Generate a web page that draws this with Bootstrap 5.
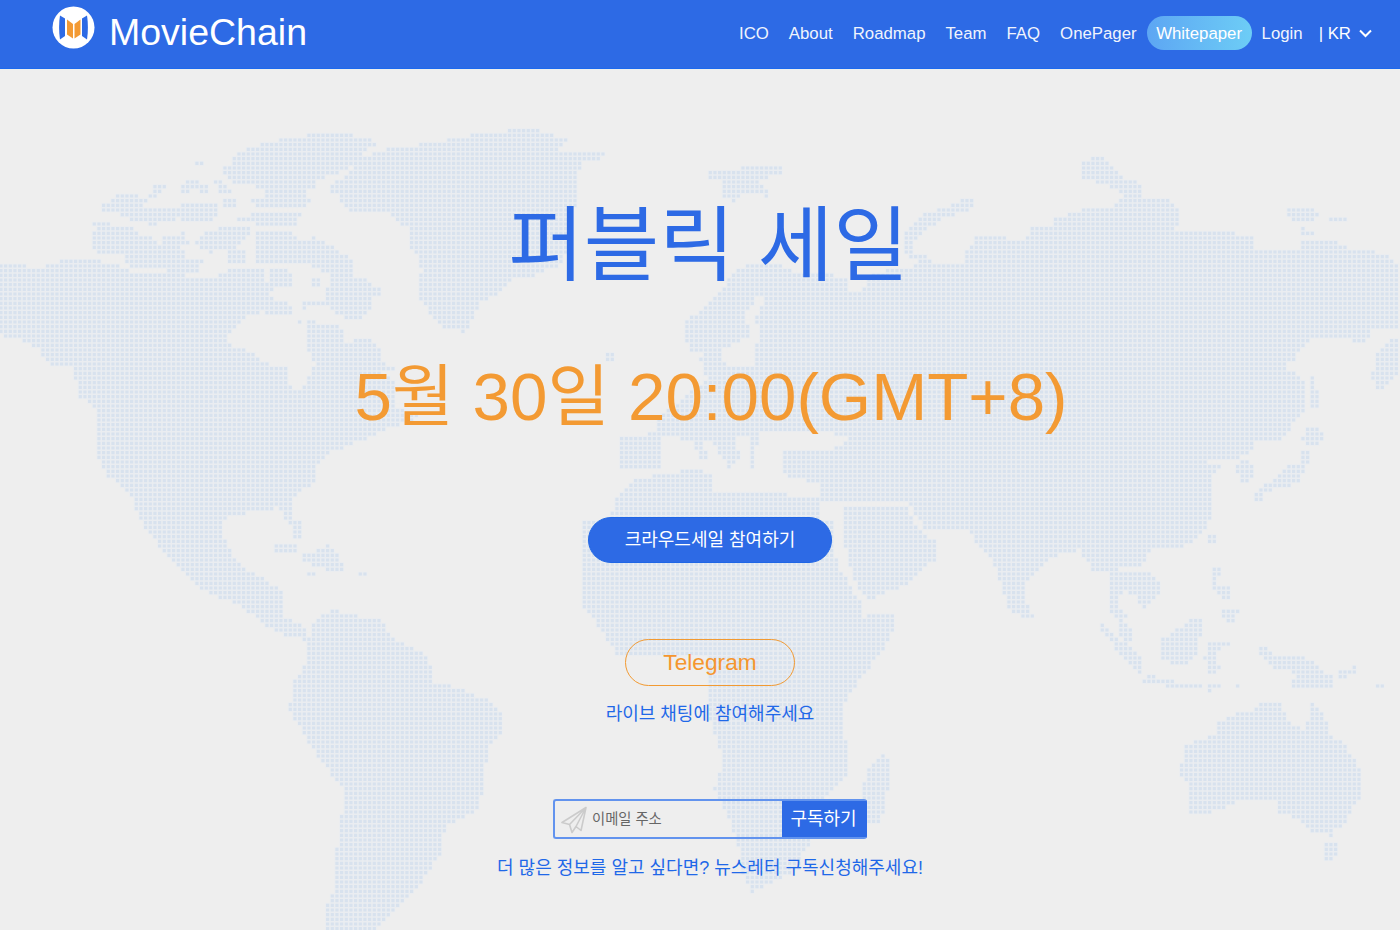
<!DOCTYPE html>
<html lang="ko">
<head>
<meta charset="utf-8">
<title>MovieChain</title>
<link href="https://cdn.jsdelivr.net/npm/bootstrap@5.3.0/dist/css/bootstrap.min.css" rel="stylesheet">
<style>
:root{--mc-blue:#2d6ae5;--mc-orange:#f5962f;--mc-link:#1f68e8;}
html,body{height:100%;}
body{background:#eee;font-family:"Liberation Sans","Noto Sans CJK KR",sans-serif;overflow:hidden;position:relative;height:930px;}
.mc-map{position:absolute;left:0;top:0;width:1400px;height:930px;z-index:0;}
.mc-nav{position:relative;z-index:1;background:var(--mc-blue);height:69px;border-bottom:1px solid #1c69ee;padding:0 28px 0 52px;}
.mc-brand{color:#fff;font-size:37.5px;line-height:1;text-decoration:none;gap:14px;margin-top:-2px;}
.mc-brand svg{margin-top:-11px;}
.mc-links{font-size:16.8px;margin-top:-3px;}
.mc-links a{color:#fff;text-decoration:none;}
.mc-links>a{margin:0 20px 0 0;padding:2px 0 0;opacity:.93;}
.mc-links>a.mc-last{margin-right:10px;}
.mc-links a.mc-pill{background:linear-gradient(90deg,#5da6f3,#6dcdf6);border-radius:17px;width:105px;height:34px;line-height:36px;text-align:center;margin:0 10px 0 0;padding:0;opacity:1;}
.mc-lang{margin-left:-4px;gap:8px;color:#fff;padding-top:2px;}
.mc-main{position:relative;z-index:1;padding-left:20px;}
.mc-title{font-family:"Noto Sans CJK KR","Liberation Sans",sans-serif;color:var(--mc-blue);font-size:82px;line-height:94px;font-weight:400;margin:123px 0 0 -3px;}
.mc-date{color:#f39a33;font-size:67.3px;line-height:78px;font-weight:400;margin:72px 0 0 2px;font-family:"Liberation Sans","Noto Sans CJK KR",sans-serif;}
.mc-btn-main{background:var(--mc-blue);border:1px solid #1f66e5;color:#fff;width:244px;height:46px;border-radius:23px;font-size:18px;line-height:44px;padding:0;margin-top:81px;}
.mc-btn-main:hover{background:var(--mc-blue);color:#fff;}
.mc-btn-tg{border:1px solid #f29a32;color:var(--mc-orange);width:170px;height:47px;border-radius:24px;font-size:22.7px;line-height:45px;padding:0;margin-top:76px;}
.mc-cap{color:var(--mc-link);font-size:18px;line-height:26px;margin:15px 0 0;}
.mc-sub{margin-top:72px;width:314px;height:40px;border:2px solid #6293ee;border-right-color:var(--mc-blue);border-radius:3px;}
.mc-sub input{background:transparent;border:0;outline:0;box-shadow:none;font-size:14.3px;color:#666;padding:0 0 0 37px;height:100%;border-radius:0;}
.mc-sub input::placeholder{color:#666;opacity:1;}
.mc-sub input:focus{background:transparent;box-shadow:none;}
.mc-sub-ico{position:absolute;left:6px;top:5px;}
.mc-sub-btn{background:var(--mc-blue);color:#fff;border:0;border-radius:0;width:83px;font-size:18px;padding:0;}
.mc-sub-btn:hover{background:var(--mc-blue);color:#fff;}
.mc-note{margin-top:16px;}
</style>
</head>
<body>
<svg class="mc-map" viewBox="0 0 1400 930" aria-hidden="true">
  <path id="mc-halo" fill="#eaedf1"/>
  <path id="mc-dots" fill="#d8e2ee"/>
</svg>

<nav class="mc-nav d-flex align-items-center justify-content-between">
  <a class="mc-brand d-flex align-items-center" href="#">
    <svg width="43" height="43" viewBox="0 0 43 43" aria-hidden="true">
      <circle cx="21.5" cy="21.5" r="21" fill="#fff"/>
      <path d="M8 9.500L13 12.500V30L8 33.500C6.800 26 6.800 17 8 9.500Z" fill="#2d6ae5"/>
      <path d="M35 9.500L30 12.500V30L35 33.500C36.200 26 36.200 17 35 9.500Z" fill="#2d6ae5"/>
      <path d="M15 13.500L21 18V32.500L15 28.500Z" fill="#f39a33"/>
      <path d="M28.500 13.500L22.500 18V32.500L28.500 28.500Z" fill="#f39a33"/>
    </svg>
    <span>MovieChain</span>
  </a>
  <div class="mc-links d-flex align-items-center">
    <a href="#">ICO</a><a href="#">About</a><a href="#">Roadmap</a><a href="#">Team</a><a href="#">FAQ</a><a class="mc-last" href="#">OnePager</a>
    <a class="mc-pill" href="#">Whitepaper</a>
    <a href="#">Login</a>
    <span class="mc-lang d-flex align-items-center">| KR
      <svg width="13" height="9" viewBox="0 0 13 9" aria-hidden="true"><path d="M1 1.500L6.500 7 12 1.500" fill="none" stroke="#fff" stroke-width="2"/></svg>
    </span>
  </div>
</nav>

<main class="mc-main d-flex flex-column align-items-center">
  <h1 class="mc-title">퍼블릭 세일</h1>
  <h2 class="mc-date">5월 30일 20:00(GMT+8)</h2>
  <a class="btn mc-btn-main" href="#">크라우드세일 참여하기</a>
  <a class="btn mc-btn-tg" href="#">Telegram</a>
  <p class="mc-cap">라이브 채팅에 참여해주세요</p>
  <form class="mc-sub d-flex position-relative">
    <svg class="mc-sub-ico" width="26" height="28" viewBox="0 0 26 28" aria-hidden="true">
      <path d="M25 1.500L1 16.500 8.500 18.500 25 1.500 15 20.500 20 24.500ZM8.500 18.500L11 26.500 15 20.500" fill="none" stroke="#cbcbcb" stroke-width="1.600" stroke-linejoin="round"/>
    </svg>
    <input class="form-control flex-grow-1" type="text" placeholder="이메일 주소">
    <button class="btn mc-sub-btn flex-shrink-0" type="button">구독하기</button>
  </form>
  <p class="mc-cap mc-note">더 많은 정보를 알고 싶다면? 뉴스레터 구독신청해주세요!</p>
</main>
<script>
/* Dotted world map: land outlines are sampled on the picture's 4.67px dot grid. */
(function(){
var land=[
[0,120,1/3,"M0 432L75 432 100 445 130 445 150 432 190 420 290 420 345 432 370 445 420 460 640 470 700 445 790 445 800 470 805 565 745 590 700 625 685 650 690 675 730 680 765 705 805 735 860 745 870 800 905 815 935 740 960 740 925 700 920 600 1020 620 1040 670 1100 650 1135 680 1150 730 1190 745 1150 760 1180 780 1180 860 1270 890 1170 925 1100 955 1035 980 985 1000 950 1040 955 1075 925 1100 900 1115 875 1140 875 1195 850 1195 840 1165 770 1170 660 1200 420 1200 400 1140 365 1100 325 1070 295 1020 283 965 283 870 240 830 230 800 215 740 160 735 135 715 110 680 50 655 0 645Z M690 115L730 90 810 65 880 50 990 40 1030 40 1105 55 1145 70 1090 95 1090 125 1010 160 945 180 945 200 915 215 930 245 910 265 760 260 755 240 800 230 800 205 700 190 665 150 690 130Z M580 120L605 120 605 140 580 140Z M555 175L590 175 620 200 640 225 610 225 590 205 550 225 545 215Z M640 175L670 185 715 225 660 220Z M665 240L715 240 715 265 665 265Z M310 255L350 228 415 228 445 240 430 255 430 265 520 265 550 255 660 255 650 285 630 305 560 305 540 295 460 315 410 305 365 285 310 275Z M460 188L497 188 497 205 470 235 445 235Z M715 285L900 280 890 318 785 315 715 305Z M280 310L330 310 330 320 400 325 415 345 460 350 470 380 560 385 560 415 610 420 600 440 590 455 430 450 390 440 365 405 330 400 295 400 270 385 270 365 285 330Z M490 350L560 335 565 380 490 385Z M610 340L650 325 755 325 755 345 700 385 660 390 625 400 580 365Z M675 390L730 390 740 425 680 425Z M770 335L875 340 900 365 945 350 1000 380 1060 420 1065 470 990 470 930 435 760 425 760 350Z M810 445L870 445 875 495 810 510Z M935 470L960 470 960 495 935 495Z M990 470L1090 470 1110 495 1150 500 1145 520 1120 530 1105 590 1050 600 1005 585 975 540Z M810 525L835 540 875 555 890 575 835 590 800 580 800 565Z M905 540L975 540 975 560 905 565Z M840 595L865 595 865 602 840 602Z M895 595L905 595 905 615 895 615Z M990 195L1060 150 1060 130 1140 90 1290 70 1300 65 1340 70 1350 55 1450 40 1595 25 1640 40 1700 55 1695 75 1620 80 1690 90 1815 95 1810 115 1750 130 1730 180 1730 240 1690 430 1640 450 1610 465 1540 480 1500 520 1440 545 1420 590 1400 635 1330 630 1300 600 1285 570 1250 520 1250 480 1280 440 1250 440 1250 400 1235 385 1220 320 1180 300 1165 270 1060 275 1030 260 1015 225 990 220Z"],
[520,120,1/3,"M570 150L640 150 680 135 750 135 810 150 760 170 715 180 755 220 740 235 710 215 660 225 650 250 610 230 610 190 570 175Z M260 700L280 700 280 725 260 725Z M600 510L650 450 700 430 770 430 830 460 920 460 985 475 990 510 1030 510 1050 465 1150 440 1320 430 1320 1200 1190 1200 1170 1150 900 1150 900 1090 810 1075 790 1050 790 990 930 990 990 960 940 940 820 930 720 930 700 1040 690 1040 690 940 640 960 670 1010 630 1050 600 1000 575 960 540 960 570 1020 540 1020 520 960 430 950 430 1050 300 1050 300 950 410 940 410 900 530 800 560 780 540 720 560 690 600 690 620 740 660 740 700 740 705 690 720 640 705 590 735 530 720 520 680 580 685 650 620 680 560 690 510 690 490 630 505 595 570 550Z M1300 255L1320 255 1320 275 1265 300 1200 345 1170 395 1220 410 1250 430 1220 435 1170 415 1145 380 1150 345 1210 285Z M270 1200L290 1130 340 1075 450 1060 520 1045 575 1060 580 1120 850 1125 900 1135 900 1200Z"],
[960,120,1/3,"M0 1200L0 450 15 420 15 395 50 350 90 350 120 350 180 365 200 370 205 325 285 320 285 295 365 270 460 260 490 230 460 205 430 190 365 175 365 130 410 105 445 125 485 170 550 190 540 240 625 240 660 265 660 320 640 330 730 340 790 335 880 350 880 395 910 385 1020 385 1030 365 1135 365 1175 395 1240 395 1285 405 1300 430 1320 440 1320 620 1240 620 1220 670 1180 670 1170 650 1060 660 1020 685 1000 720 970 740 1010 760 1035 780 1030 880 1000 910 970 955 890 965 860 1010 770 1020 715 1030 780 1040 760 1070 760 1200Z M815 1030L860 1020 880 1040 875 1080 840 1090 825 1040Z M980 270L1070 270 1080 285 1060 305 990 305Z M1100 285L1140 285 1160 298 1110 305Z M1020 322L1065 340 1020 340Z M1320 650L1290 660 1245 710 1235 770 1255 815 1320 750Z M1045 755L1065 770 1080 860 1055 860 1050 900 1045 900Z M1045 920L1095 935 1095 955 1060 980 1020 965Z M1020 990L1050 990 1055 1020 1030 1060 1010 1090 960 1105 920 1115 900 1145 880 1145 885 1115 950 1075 975 1045 1020 1025Z M0 240L45 240 45 265 0 275Z"],
[0,0,1,"M140 518L222 518 225 540 240 565 262 578 283 590 283 617 295 628 306 625 306 640 285 635 265 625 240 605 200 590 175 565 150 535Z M842 505L905 505 918 530 935 540 935 560 905 585 868 600 857 590 845 545Z"],
[260,520,.42088,"M770 0L1360 0 1360 60 1380 120 1430 200 1425 230 1510 220 1500 280 1440 360 1390 430 1390 510 1400 600 1340 660 1345 720 1290 790 1280 830 1170 885 1150 860 1140 790 1110 700 1080 640 1100 570 1070 480 1060 325 850 325 810 260 770 210Z M1490 550L1495 620 1475 720 1425 730 1430 650 1440 600Z M130 235L175 210 215 225 280 235 325 285 400 320 415 385 475 400 535 425 580 470 575 510 540 540 535 620 520 690 440 730 430 790 380 870 345 905 280 970 265 1015 245 1050 245 1095 210 1140 215 1190 250 1220 180 1220 145 1150 145 1040 155 930 180 860 180 790 190 740 200 640 180 620 115 530 70 450 80 385 110 340 110 300Z M0 170L55 170 55 225 100 250 110 280 45 270 25 230 0 215Z M35 60L85 60 85 80 40 85Z M100 85L160 60 185 75 205 120 155 120 140 110 105 100Z M230 125L250 125 250 135 230 135Z M110 125L130 125 130 135 110 135Z M70 0L100 0 95 40 80 40Z"],
[920,520,1/3,"M10 0L860 0 860 30 830 60 780 85 700 90 680 110 670 135 520 160 510 130 485 110 485 90 410 105 360 140 320 190 320 240 340 295 310 290 270 270 240 190 225 140 215 115 185 90 170 70 150 35 10 25Z M865 45L890 45 890 80 865 65Z M870 140L900 140 905 160 890 170 890 200 925 195 940 230 910 240 870 200Z M900 265L955 265 955 285 935 310 895 285Z M565 155L685 150 725 185 725 220 690 255 670 270 650 235 610 210 590 260 630 300 590 300 565 260Z M590 280L610 295 630 320 640 365 610 370 595 320Z M530 305L550 305 580 345 640 385 670 415 670 460 650 460 600 410 580 370 555 345Z M665 480L765 480 760 490 850 490 850 500 760 500 665 490Z M680 465L710 465 710 475 680 475Z M865 490L905 490 905 500 865 500Z M945 490L970 490 945 505Z M855 510L875 510 875 520 855 520Z M830 290L850 305 835 390 820 420 805 435 760 435 730 420 715 390 715 360 745 345 780 320Z M865 370L930 370 930 380 900 380 890 415 900 445 880 460 855 460 860 425 840 415 865 400Z M1015 385L1050 385 1065 410 1145 410 1190 430 1215 455 1240 465 1240 500 1110 500 1110 490 1125 470 1110 450 1060 445 1040 425 1015 400Z M1260 450L1310 440 1310 460 1260 475Z M785 685L810 670 855 655 895 640 895 605 935 590 960 575 1000 575 1015 548 1090 548 1095 600 1120 620 1150 625 1165 600 1165 550 1170 520 1175 550 1215 590 1230 650 1270 670 1295 710 1325 750 1325 825 1295 860 1285 890 1270 920 1240 930 1240 950 1220 940 1170 935 1135 900 1080 880 1070 850 1045 835 970 835 925 855 910 868 850 880 810 880 800 860 810 830 800 780 772 755 785 730Z M1205 965L1255 965 1255 990 1240 1020 1220 1020 1205 1000Z M1370 490L1392 490 1392 503 1370 503Z"]
];
var ctx=document.createElement('canvas').getContext('2d');
land.forEach(function(l){l[4]=new Path2D(l[3]);});
var step=14/3,dots=[],halo=[];
for(var r=0;r*step<930+step;r++){
  for(var c=0;c*step<1400+step;c++){
    var x=.95+c*step,y=r*step;
    var hit=land.some(function(l){return ctx.isPointInPath(l[4],(x-l[0])/l[2],(y-l[1])/l[2]);});
    if(hit){
      dots.push('M'+(x-1.6).toFixed(2)+' '+(y-1.6).toFixed(2)+'h3.2v3.2h-3.2z');
      halo.push('M'+(x-2.33).toFixed(2)+' '+(y-2.33).toFixed(2)+'h4.67v4.67h-4.67z');
    }
  }
}
document.getElementById('mc-dots').setAttribute('d',dots.join(''));
document.getElementById('mc-halo').setAttribute('d',halo.join(''));
})();
</script>
<script src="https://cdn.jsdelivr.net/npm/bootstrap@5.3.0/dist/js/bootstrap.bundle.min.js"></script>
</body>
</html>
